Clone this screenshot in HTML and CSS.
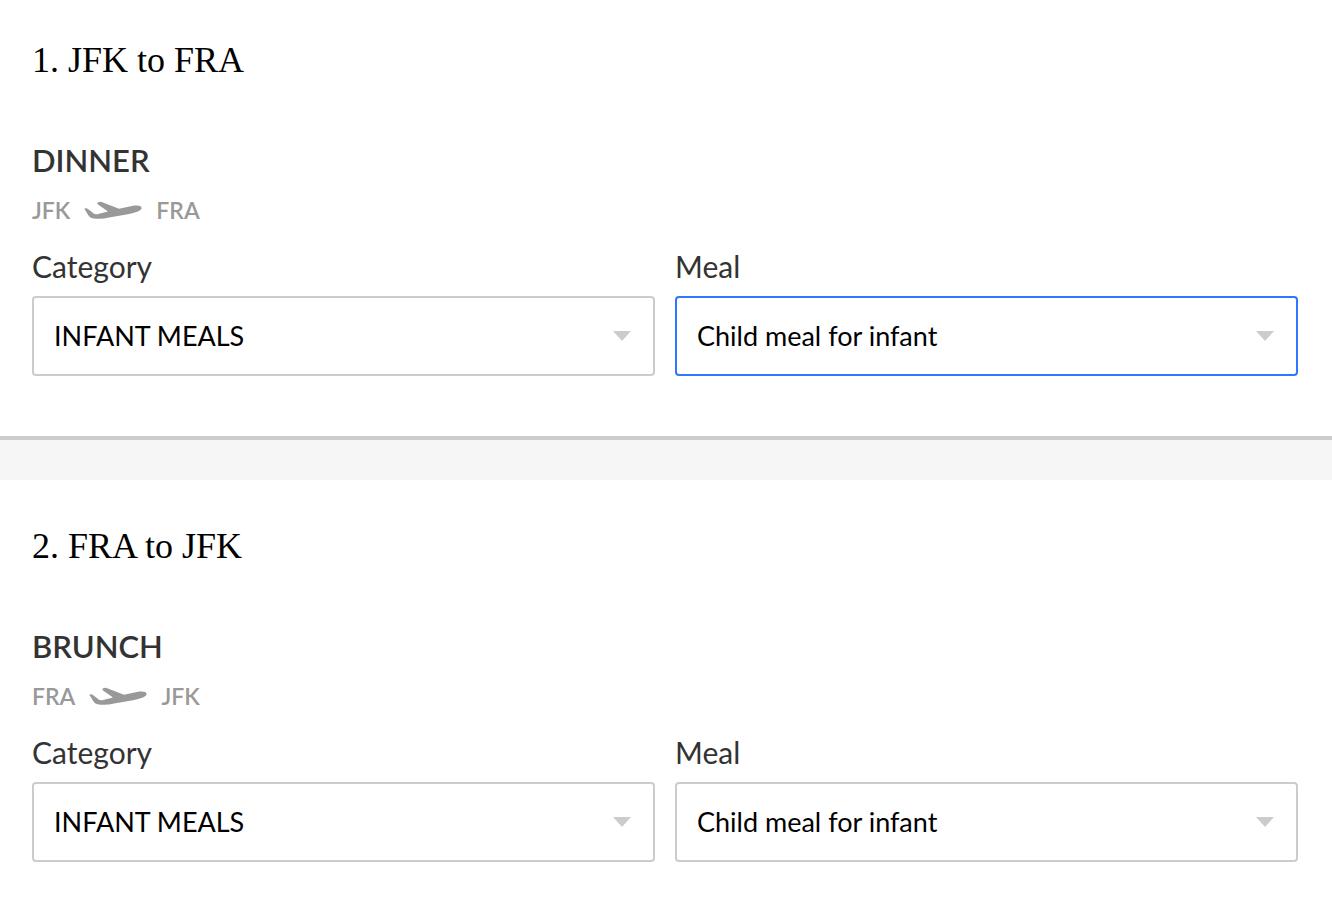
FILE: index.html
```html
<!DOCTYPE html>
<html lang="en">
<head>
<meta charset="utf-8">
<meta name="viewport" content="width=device-width, initial-scale=1">
<title>Meal selection</title>
<link rel="stylesheet" href="styles.css">
</head>
<body>
<svg class="sprite" aria-hidden="true">
  <symbol id="plane" viewBox="31 22 174 56">
    <path d="M32 45Q37 41 44 46L61 60Q64 62 70 61L103 53L72 31Q68 25 82 24L136 45L182 35Q202 33 204 42Q204 48 193 53Q179 58 163 61L106 71Q80 78 56 73Q50 72 46 67Z"/>
  </symbol>
</svg>
<main class="flights">
  <section class="flight">
    <h2 class="flight-title">1. JFK to FRA</h2>
    <h3 class="service">DINNER</h3>
    <p class="route"><span>JFK</span><svg class="plane" aria-hidden="true"><use href="#plane"/></svg><span>FRA</span></p>
    <div class="fields">
      <div class="field">
        <label class="label" for="category-1">Category</label>
        <div class="control">
          <select class="select" id="category-1"><option>INFANT MEALS</option></select>
          <svg class="arrow" viewBox="0 0 18 10" aria-hidden="true"><path d="M0 0H18L9 10Z"/></svg>
        </div>
      </div>
      <div class="field">
        <label class="label" for="meal-1">Meal</label>
        <div class="control">
          <select class="select select-active" id="meal-1"><option>Child meal for infant</option></select>
          <svg class="arrow" viewBox="0 0 18 10" aria-hidden="true"><path d="M0 0H18L9 10Z"/></svg>
        </div>
      </div>
    </div>
  </section>
  <section class="flight">
    <h2 class="flight-title">2. FRA to JFK</h2>
    <h3 class="service">BRUNCH</h3>
    <p class="route"><span>FRA</span><svg class="plane" aria-hidden="true"><use href="#plane"/></svg><span>JFK</span></p>
    <div class="fields">
      <div class="field">
        <label class="label" for="category-2">Category</label>
        <div class="control">
          <select class="select" id="category-2"><option>INFANT MEALS</option></select>
          <svg class="arrow" viewBox="0 0 18 10" aria-hidden="true"><path d="M0 0H18L9 10Z"/></svg>
        </div>
      </div>
      <div class="field">
        <label class="label" for="meal-2">Meal</label>
        <div class="control">
          <select class="select" id="meal-2"><option>Child meal for infant</option></select>
          <svg class="arrow" viewBox="0 0 18 10" aria-hidden="true"><path d="M0 0H18L9 10Z"/></svg>
        </div>
      </div>
    </div>
  </section>
</main>
</body>
</html>
```
FILE: styles.css
```css
* {
  box-sizing: border-box;
}

body {
  margin: 0;
  background: #fff;
  color: #333;
  font-family: Lato, sans-serif;
}

.sprite {
  display: none;
}

.flights {
  display: grid;
  gap: 40px;
  background: #f6f6f6;
}

.flight {
  padding: 42px 34px 56px 32px;
  background: #fff;
}

.flight:first-child {
  padding-top: 36px;
  padding-bottom: 60px;
  border-bottom: 4px solid #ccc;
}

.flight-title {
  margin: 0 0 56px;
  color: #000;
  font: 400 36px/48px "Liberation Serif", serif;
}

.service {
  margin: 0;
  font-size: 31px;
  font-weight: 600;
  line-height: 40px;
}

.route {
  display: flex;
  align-items: center;
  gap: 14px;
  margin: 14px 0 18px;
  color: #999;
  font-size: 23px;
  font-weight: 600;
  line-height: 32px;
}

.plane {
  width: 58px;
  height: 19px;
  fill: #999;
}

.fields {
  display: grid;
  grid-template-columns: 1fr 1fr;
  gap: 20px;
}

.label {
  display: block;
  margin-bottom: 8px;
  font-size: 30px;
  line-height: 44px;
}

.control {
  display: grid;
  align-items: center;
}

.select,
.arrow {
  grid-area: 1 / 1;
}

.select {
  appearance: none;
  width: 100%;
  height: 80px;
  padding: 0 60px 0 20px;
  border: 2px solid #ccc;
  border-radius: 4px;
  outline: 0;
  background: #fff;
  color: #000;
  font: 400 27px/36px Lato, sans-serif;
}

.select-active,
.select:focus {
  border-color: #2e77ff;
}

.arrow {
  justify-self: end;
  width: 18px;
  height: 10px;
  margin-right: 24px;
  fill: #ccc;
  pointer-events: none;
}
```
